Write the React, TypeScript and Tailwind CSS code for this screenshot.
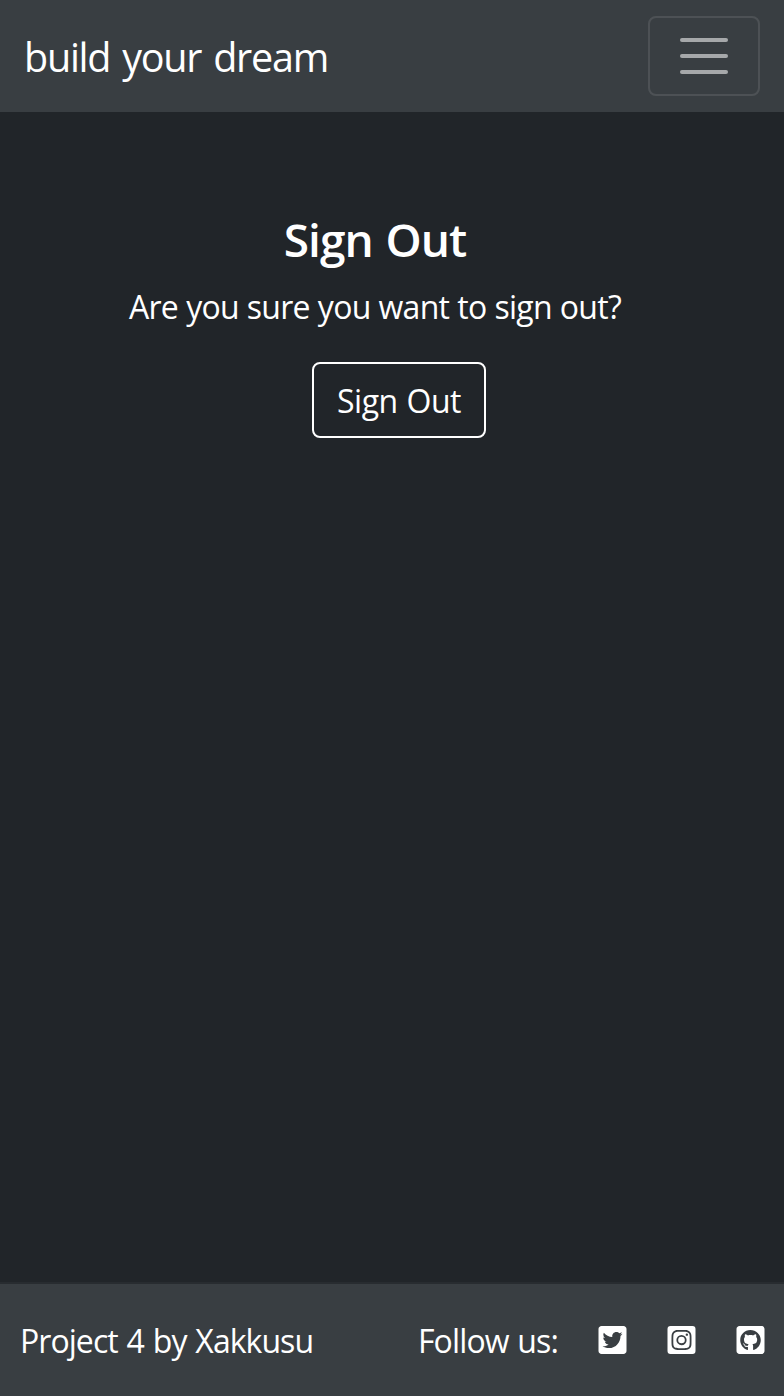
import React from "react";
import { FaTwitterSquare, FaInstagramSquare, FaGithubSquare } from "react-icons/fa";

export default function App() {
  return (
    <div className="flex h-[1396px] w-[784px] flex-col bg-[#212529] font-['Open_Sans',sans-serif] text-white">
      <nav className="flex h-[112px] items-center justify-between bg-[#393e42] px-6">
        <span className="pt-0.5 text-[39.5px] leading-[60px] tracking-[-1.25px] whitespace-nowrap [word-spacing:3px]">build your dream</span>
        <button aria-label="Menu" className="flex h-20 w-28 flex-col items-center justify-center gap-3 rounded-lg border-2 border-white/10">
          <span className="h-1 w-12 rounded-full bg-white/55" />
          <span className="h-1 w-12 rounded-full bg-white/55" />
          <span className="h-1 w-12 rounded-full bg-white/55" />
        </button>
      </nav>
      <main className="flex flex-1 flex-col items-center pt-[100px] pr-[34px]">
        <h1 className="text-[46px] leading-[55px] font-semibold tracking-[-1px] whitespace-nowrap [word-spacing:2px]">Sign Out</h1>
        <p className="mt-4 text-[32px] leading-[48px] tracking-[-0.75px] whitespace-nowrap [word-spacing:0.5px]">Are you sure you want to sign out?</p>
        <button className="mt-[31px] ml-12 h-[76px] w-[174px] rounded-lg border-2 border-white pt-0.5 text-[32px] tracking-[-0.5px] whitespace-nowrap [word-spacing:1px]">Sign Out</button>
      </main>
      <footer className="flex h-[114px] items-center justify-between border-t-2 border-[#282c30] bg-[#393e42] pr-[19px] pl-5 text-[32px]">
        <span className="pt-0.5 tracking-[-0.95px] whitespace-nowrap [word-spacing:1.5px]">Project 4 by Xakkusu</span>
        <div className="flex items-center">
          <span className="mr-10 pt-0.5 tracking-[-0.85px] whitespace-nowrap [word-spacing:1px]">Follow us:</span>
          <div className="flex items-center gap-10">
            <FaTwitterSquare className="h-8 w-[29px]" />
            <FaInstagramSquare className="h-8 w-[29px]" />
            <FaGithubSquare className="h-8 w-[29px]" />
          </div>
        </div>
      </footer>
    </div>
  );
}
